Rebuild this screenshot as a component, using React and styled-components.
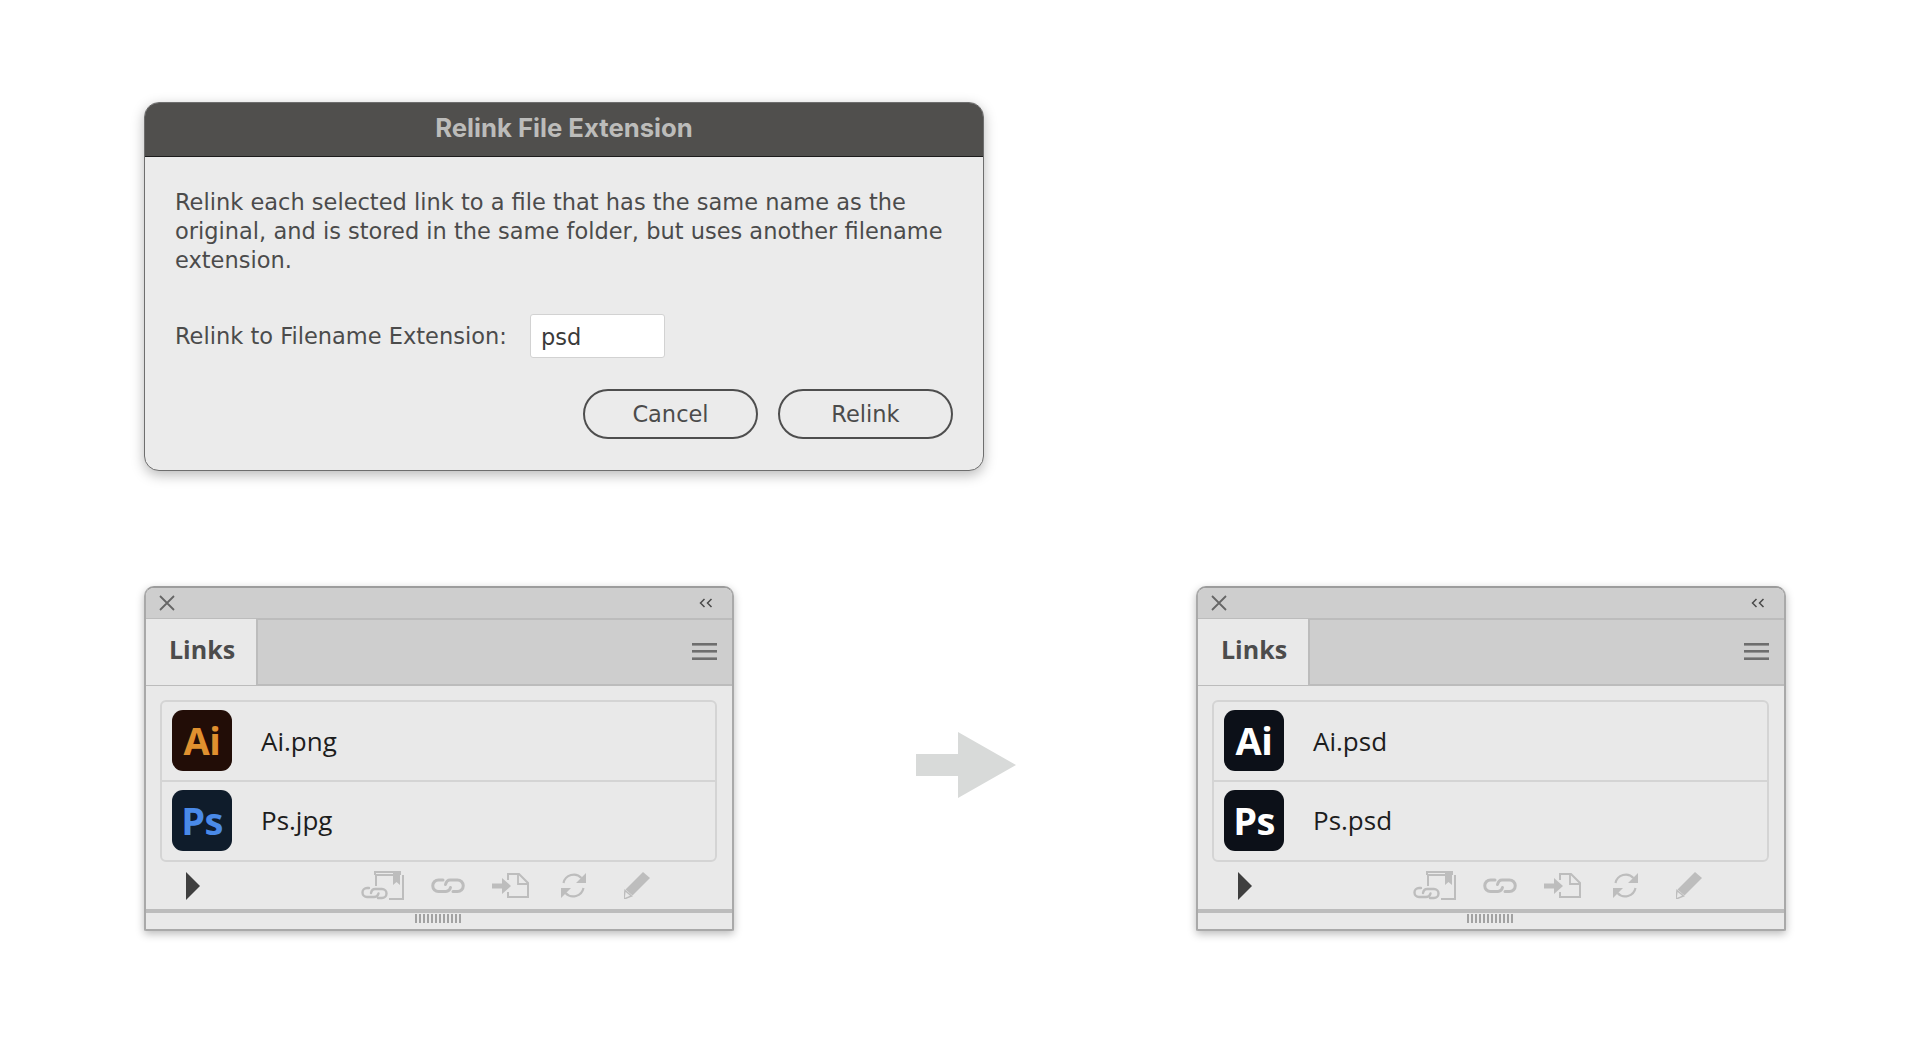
import React from "react";
import styled, { createGlobalStyle } from "styled-components";

const GlobalStyle = createGlobalStyle`
  html, body {
    margin: 0;
    padding: 0;
    background: #fff;
  }
`;

const Page = styled.div`
  width: 1932px;
  height: 1052px;
  box-sizing: border-box;
  padding: 102px 0 0 144px;
  overflow: hidden;
  background: #fff;
`;

const Dialog = styled.div`
  width: 840px;
  height: 369px;
  box-sizing: border-box;
  border: 1px solid #6e6e6e;
  border-radius: 15px;
  background: #ebebeb;
  box-shadow: 0 4px 13px rgba(0, 0, 0, 0.28);
  overflow: hidden;
`;

const DialogHeader = styled.div`
  height: 54px;
  box-sizing: border-box;
  border-bottom: 1px solid #1c1c1c;
  background: #504f4d;
  color: #bcbcba;
  font: 700 25.7px/50px Inter, "Liberation Sans", sans-serif;
  text-align: center;
`;

const DialogBody = styled.div`
  padding: 31px 30px 0;
  color: #4b4b4b;
  font-family: "DejaVu Sans", sans-serif;
  font-size: 22.5px;
`;

const Message = styled.p`
  margin: 0;
  line-height: 29px;
`;

const FieldRow = styled.div`
  display: flex;
  align-items: center;
  margin-top: 39px;
`;

const FieldLabel = styled.label`
  width: 355px;
`;

const ExtInput = styled.input`
  width: 135px;
  height: 44px;
  box-sizing: border-box;
  padding: 2px 10px 0;
  border: 1px solid #d2d2d2;
  border-radius: 3px;
  background: #fff;
  color: #3a3a3a;
  font: inherit;
  outline: none;
`;

const Actions = styled.div`
  display: flex;
  justify-content: flex-end;
  gap: 20px;
  margin-top: 31px;
`;

const PillButton = styled.button`
  width: 175px;
  height: 50px;
  padding: 0;
  border: 2px solid #4e4e4e;
  border-radius: 25px;
  background: transparent;
  color: #4b4b4b;
  font: inherit;
`;

const BottomRow = styled.div`
  display: flex;
  align-items: flex-start;
  margin-top: 115px;
`;

const Panel = styled.div`
  width: 590px;
  height: 345px;
  box-sizing: border-box;
  border: 2px solid #a9a9a9;
  border-top-color: #9c9c9c;
  border-radius: 10px 10px 2px 2px;
  background: #e9e9e9;
  box-shadow: 0 3px 9px rgba(0, 0, 0, 0.27);
  overflow: hidden;
`;

const TitleBar = styled.div`
  display: flex;
  align-items: center;
  justify-content: space-between;
  height: 32px;
  box-sizing: border-box;
  padding: 0 19px 0 12px;
  background: #cecece;
  border-bottom: 2px solid #bcbcbc;
`;

const TabBar = styled.div`
  display: flex;
  align-items: center;
  justify-content: space-between;
  height: 66px;
  box-sizing: border-box;
  padding-right: 14px;
  background: #cecece;
  border-bottom: 2px solid #bcbcbc;
`;

const Tab = styled.div`
  width: 112px;
  height: 66px;
  box-sizing: border-box;
  padding: 12px 0 0 23px;
  background: #e9e9e9;
  border-right: 2px solid #bcbcbc;
  color: #4c4c4c;
  font: 700 25px/36px "Open Sans", sans-serif;
`;

const LinkList = styled.div`
  margin: 14px 15px 0 14px;
  height: 162px;
  box-sizing: border-box;
  border: 2px solid #d4d4d4;
  border-radius: 6px;
`;

const LinkRow = styled.div`
  display: flex;
  align-items: center;
  height: ${(p) => p.$h}px;
  box-sizing: border-box;
  padding: 0 0 2px 10px;
  border-top: ${(p) => (p.$divided ? "2px solid #d4d4d4" : "none")};
`;

const AppIcon = styled.div`
  display: flex;
  align-items: center;
  justify-content: center;
  width: 60px;
  height: 61px;
  flex: none;
  border-radius: 11px;
  background: ${(p) => p.$bg};
  color: ${(p) => p.$fg};
  font: 700 38px/1 "Open Sans", sans-serif;
  letter-spacing: -0.5px;
`;

const FileName = styled.span`
  margin-left: 29px;
  padding-bottom: ${(p) => (p.$raised ? "1px" : "0")};
  padding-top: ${(p) => (p.$raised ? "0" : "2px")};
  color: #1d1d1d;
  font: 400 26px/1 "Open Sans", sans-serif;
`;

const Footer = styled.div`
  display: flex;
  align-items: center;
  height: 47px;
  padding-left: 40px;
`;

const FooterIcons = styled.div`
  display: grid;
  grid-auto-flow: column;
  grid-auto-columns: 63px;
  justify-items: center;
  align-items: center;
  margin-left: 153px;
`;

const Grip = styled.div`
  display: flex;
  justify-content: center;
  height: 20px;
  box-sizing: border-box;
  padding-top: 1px;
  border-top: 4px solid #bcbcbc;
`;

const GripMarks = styled.div`
  width: 47px;
  height: 9px;
  margin-right: 2px;
  background: repeating-linear-gradient(90deg, #a2a2a2 0 2px, transparent 2px 4px);
`;

const ArrowHolder = styled.div`
  flex: none;
  margin: 146px 180px 0 182px;
  line-height: 0;
`;

const FolderSvg = styled.svg`
  margin-right: 6px;
`;

const Close = () => (
  <svg width="18" height="18" viewBox="0 0 18 18" fill="none" stroke="#666" strokeWidth="1.8">
    <path d="M2 2l14 14M16 2L2 16" />
  </svg>
);

const Collapse = () => (
  <svg width="14" height="10" viewBox="0 0 14 10" fill="none" stroke="#4a4a4a" strokeWidth="1.5">
    <path d="M5.5 1L1.5 5l4 4M12.5 1L8.5 5l4 4" />
  </svg>
);

const Hamburger = () => (
  <svg width="26" height="18" viewBox="0 0 26 18" fill="#6e6e6e">
    <rect x="0" y="0" width="25" height="2.6" />
    <rect x="0" y="7" width="25" height="2.6" />
    <rect x="0" y="14.4" width="25" height="2.6" />
  </svg>
);

const PlayMark = () => (
  <svg width="14" height="28" viewBox="0 0 14 28" fill="#3f3f3f">
    <path d="M0 0l14 14L0 28z" />
  </svg>
);

const RelinkFolderIcon = () => (
  <FolderSvg width="44" height="29" viewBox="0 0 44 29" fill="none" stroke="#bdbdbd" strokeWidth="2">
    <path d="M16 15V4h23" />
    <path d="M15 4V1h25v3" />
    <path d="M43 4v24H29" />
    <path d="M33 2h7v12l-3.500-3-3.500 3z" fill="#bdbdbd" stroke="none" />
    <path
      d="M9 17H7a4.500 4.500 0 0 0 0 9h7c2.500 0 4-1.500 4.500-3.500M13 26M15 18h7a4.500 4.500 0 0 1 0 9h-4M11 22c.5-2.500 2-4 4-4"
      strokeWidth="2.400"
      strokeLinecap="round"
    />
  </FolderSvg>
);

const ChainIcon = () => (
  <svg width="34" height="16" viewBox="0 0 34 16" fill="none" stroke="#bdbdbd" strokeWidth="3" strokeLinecap="round">
    <path d="M12 2H7.500a5.700 5.700 0 0 0 0 11.500H15c2.500 0 4-2 4.500-4" />
    <path d="M14.500 6.500c.5-2 2-4.500 4.500-4.500h7.500a5.700 5.700 0 0 1 0 11.500H22" />
  </svg>
);

const GotoIcon = () => (
  <svg width="37" height="25" viewBox="0 0 37 25" fill="none">
    <path d="M16 7V1h11l9 9v14H16v-5" stroke="#bdbdbd" strokeWidth="2" />
    <path d="M26 1v10h10" stroke="#bdbdbd" strokeWidth="1.800" />
    <path d="M0 10.500h10V5l9 8-9 8v-5.500H0z" fill="#bdbdbd" />
  </svg>
);

const RefreshIcon = () => (
  <svg width="27" height="27" viewBox="0 0 27 27" fill="none">
    <path d="M3.500 11A10.500 10.500 0 0 1 21.500 6M23.500 16A10.500 10.500 0 0 1 5.500 21" stroke="#bdbdbd" strokeWidth="2.200" />
    <path d="M26 1v10H16zM1 26V16h10z" fill="#bdbdbd" />
  </svg>
);

const PencilIcon = () => (
  <svg width="26" height="27" viewBox="0 0 26 27">
    <path d="M19 0l7 6L8.500 23.500l-7-6z" fill="#bdbdbd" />
    <path d="M1 18.500l6.500 5.500L0 27z" fill="none" stroke="#bdbdbd" strokeWidth="1.500" />
  </svg>
);

const Arrow = () => (
  <svg width="100" height="66" viewBox="0 0 100 66" fill="#d8dad9">
    <path d="M0 22h42V0l58 33-58 33V44H0z" />
  </svg>
);

const LinksPanel = ({ ai, ps, aiColors, psColors }) => (
  <Panel>
    <TitleBar>
      <Close />
      <Collapse />
    </TitleBar>
    <TabBar>
      <Tab>Links</Tab>
      <Hamburger />
    </TabBar>
    <LinkList>
      <LinkRow $h={78}>
        <AppIcon $bg={aiColors[0]} $fg={aiColors[1]}>Ai</AppIcon>
        <FileName>{ai}</FileName>
      </LinkRow>
      <LinkRow $h={80} $divided>
        <AppIcon $bg={psColors[0]} $fg={psColors[1]}>Ps</AppIcon>
        <FileName $raised>{ps}</FileName>
      </LinkRow>
    </LinkList>
    <Footer>
      <PlayMark />
      <FooterIcons>
        <RelinkFolderIcon />
        <ChainIcon />
        <GotoIcon />
        <RefreshIcon />
        <PencilIcon />
      </FooterIcons>
    </Footer>
    <Grip>
      <GripMarks />
    </Grip>
  </Panel>
);

const App = () => {
  return (
    <Page>
      <GlobalStyle />
      <Dialog>
        <DialogHeader>Relink File Extension</DialogHeader>
        <DialogBody>
          <Message>
            Relink each selected link to a file that has the same name as the
            <br />
            original, and is stored in the same folder, but uses another filename
            <br />
            extension.
          </Message>
          <FieldRow>
            <FieldLabel>Relink to Filename Extension:</FieldLabel>
            <ExtInput defaultValue="psd" />
          </FieldRow>
          <Actions>
            <PillButton>Cancel</PillButton>
            <PillButton>Relink</PillButton>
          </Actions>
        </DialogBody>
      </Dialog>
      <BottomRow>
        <LinksPanel
          ai="Ai.png"
          ps="Ps.jpg"
          aiColors={["#220d07", "#e0902f"]}
          psColors={["#0f1c2b", "#4a8ae8"]}
        />
        <ArrowHolder>
          <Arrow />
        </ArrowHolder>
        <LinksPanel
          ai="Ai.psd"
          ps="Ps.psd"
          aiColors={["#0c1018", "#ffffff"]}
          psColors={["#0c1018", "#ffffff"]}
        />
      </BottomRow>
    </Page>
  );
};

export default App;
